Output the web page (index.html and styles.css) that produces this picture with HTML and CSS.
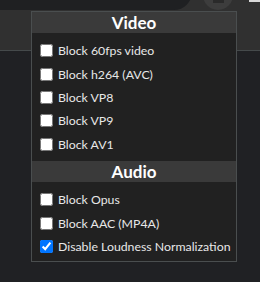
FILE: index.html
```html
<!DOCTYPE html>
<html lang="en">

<head>
  <meta charset="UTF-8">
  <meta name="viewport" content="width=device-width, initial-scale=1.0">
  <title>Codec Settings</title>
  <link rel="stylesheet" href="styles.css">
</head>

<body>
  <div class="toolbar">
    <div class="search_bar"></div>
    <div class="avatar"><span class="avatar_inner"></span></div>
    <div class="corner_mark"></div>
  </div>

  <div class="popup" id="popup">
    <div class="group_title">Video</div>
    <div class="options">
      <label><input type="checkbox" name="block_60fps"> Block 60fps video</label>
      <label><input type="checkbox" name="block_h264"> Block h264 (AVC)</label>
      <label><input type="checkbox" name="block_vp8"> Block VP8</label>
      <label><input type="checkbox" name="block_vp9"> Block VP9</label>
      <label><input type="checkbox" name="block_av1"> Block AV1</label>
    </div>

    <div class="group_title">Audio</div>
    <div class="options">
      <label><input type="checkbox" name="block_opus"> Block Opus</label>
      <label><input type="checkbox" name="block_aac"> Block AAC (MP4A)</label>
      <label><input type="checkbox" name="disable_loudness" checked> Disable Loudness Normalization</label>
    </div>
  </div>
</body>

</html>
```

FILE: styles.css
```css
body {
  margin: 0;
  padding: 0;
  box-sizing: border-box;
  height: 100vh;
  background-color: #202124;
  font-family: Lato, "Noto Sans", sans-serif;
  overflow: hidden;
}

.toolbar {
  display: flex;
  flex-direction: row;
  align-items: flex-start;
  height: 50px;
  background-color: #303030;
  border-bottom: 1px solid #454a4b;
}

.search_bar {
  width: 212px;
  height: 36px;
  margin-top: -26px;
  margin-left: -20px;
  border-radius: 18px;
  background-color: #1f2022;
}

.avatar {
  display: flex;
  justify-content: center;
  width: 30px;
  height: 30px;
  margin-top: -20px;
  margin-left: 11px;
  border-radius: 50%;
  background-color: #3d3d3d;
}

.avatar_inner {
  width: 11px;
  height: 23px;
  background-color: #2a2a2a;
}

.corner_mark {
  width: 11px;
  height: 2px;
  margin-left: 16px;
  background-color: #d8d8d8;
}

/* popup hangs over the toolbar and page */
.popup {
  position: absolute;
  top: 11px;
  left: 31px;
  width: 204px;
  height: 249px;
  background-color: #212121;
  border: 1px solid #4a4e4f;
}

.group_title {
  height: 21px;
  line-height: 21px;
  text-align: center;
  font-size: 17px;
  font-weight: bold;
  color: #ffffff;
  background-color: #3a3a3a;
}

.options {
  display: flex;
  flex-direction: column;
  padding: 6px 0 5px 4px;
}

.options label {
  display: flex;
  align-items: center;
  height: 23.4px;
  font-size: 12.3px;
  color: #e8e8e8;
  white-space: nowrap;
}

.options input[type="checkbox"] {
  width: 13px;
  height: 13px;
  margin: 0 5px 0 4px;
}
```
